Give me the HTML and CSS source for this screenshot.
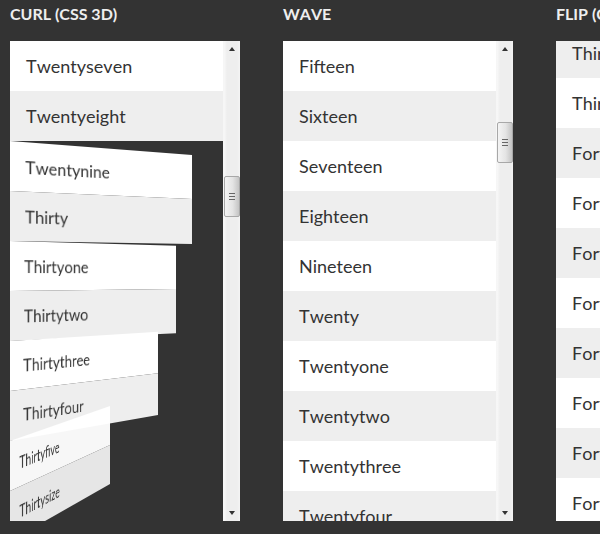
FILE: index.html
```html
<!doctype html>
<html lang="en">
<head>
  <meta charset="utf-8">
  <title>List scroll effects</title>
  <link rel="stylesheet" href="styles.css">
</head>
<body>
  <main class="columns">
    <section class="column">
      <h2 class="column__title">Curl (CSS 3D)</h2>
      <div class="scroller">
        <ul class="list">
          <li>Twentyseven</li>
          <li>Twentyeight</li>
          <li class="curl curl--29">Twentynine</li>
          <li class="curl curl--30">Thirty</li>
          <li class="curl curl--31">Thirtyone</li>
          <li class="curl curl--32">Thirtytwo</li>
          <li class="curl curl--33">Thirtythree</li>
          <li class="curl curl--34">Thirtyfour</li>
          <li class="curl curl--35">Thirtyfive</li>
          <li class="curl curl--36">Thirtysize</li>
        </ul>
        <div class="scrollbar">
          <span class="scrollbar__arrow scrollbar__arrow--up"></span>
          <div class="scrollbar__track scrollbar__track--curl">
            <div class="scrollbar__thumb"><span class="scrollbar__grip"></span></div>
          </div>
          <span class="scrollbar__arrow scrollbar__arrow--down"></span>
        </div>
      </div>
    </section>

    <section class="column">
      <h2 class="column__title">Wave</h2>
      <div class="scroller">
        <ul class="list">
          <li>Fifteen</li>
          <li>Sixteen</li>
          <li>Seventeen</li>
          <li>Eighteen</li>
          <li>Nineteen</li>
          <li>Twenty</li>
          <li>Twentyone</li>
          <li>Twentytwo</li>
          <li>Twentythree</li>
          <li>Twentyfour</li>
        </ul>
        <div class="scrollbar">
          <span class="scrollbar__arrow scrollbar__arrow--up"></span>
          <div class="scrollbar__track scrollbar__track--wave">
            <div class="scrollbar__thumb"><span class="scrollbar__grip"></span></div>
          </div>
          <span class="scrollbar__arrow scrollbar__arrow--down"></span>
        </div>
      </div>
    </section>

    <section class="column">
      <h2 class="column__title">Flip (CSS 3D)</h2>
      <div class="scroller">
        <ul class="list list--flip">
          <li>Thirtyeight</li>
          <li>Thirtynine</li>
          <li>Forty</li>
          <li>Fortyone</li>
          <li>Fortytwo</li>
          <li>Fortythree</li>
          <li>Fortyfour</li>
          <li>Fortyfive</li>
          <li>Fortysix</li>
          <li>Fortyseven</li>
        </ul>
      </div>
    </section>
  </main>
</body>
</html>
```

FILE: styles.css
```css
html {
  background-color: #333;
}

body {
  margin: 0;
  height: 534px;
  overflow: hidden;
  font-family: "Lato", "Liberation Sans", sans-serif;
  font-kerning: none;
}

.columns {
  display: flex;
  gap: 43px;
  padding-left: 10px;
}

.column {
  flex: none;
  width: 230px;
}

.column__title {
  margin: 0;
  height: 41px;
  padding-top: 5px;
  box-sizing: border-box;
  font-size: 16px;
  line-height: 18px;
  font-weight: 700;
  color: #eee;
  text-transform: uppercase;
}

.scroller {
  display: flex;
  height: 480px;
  overflow: hidden;
}

.list {
  flex: 1;
  min-width: 0;
  margin: 0;
  padding: 0;
  list-style: none;
  font-size: 18px;
  color: #333;
}

.list--flip {
  margin-top: -13px;
}

.list li {
  height: 50px;
  padding: 0 16px;
  line-height: 50px;
  background-color: #fff;
}

.list li:nth-child(even) {
  background-color: #eee;
}

/* this list starts on an even number, so the stripes swap */
.list--flip li:nth-child(odd) {
  background-color: #eee;
}

.list--flip li:nth-child(even) {
  background-color: #fff;
}

/* each row keeps its flow slot, the left edge stays put and the right side folds back */
.curl {
  transform-origin: 0 0;
}

.curl--29 { transform: matrix3d(0.971, 0.0747, 0, 0.00064, 0, 1, 0, 0, 0, 0, 1, 0, 0, 0, 0, 1); }
.curl--30 { transform: matrix3d(0.9494, 0.0417, 0, 0.000522, 0, 1, 0, 0, 0, 0, 1, 0, 0, 0, 0, 1); }
.curl--31 { transform: matrix3d(0.8999, 0.0255, 0, 0.000726, 0, 1, 0, 0, 0, 0, 1, 0, 0, 0, 0, 1); }
.curl--32 { transform: matrix3d(0.8796, -0.0106, 0, 0.000604, 0, 1, 0, 0, 0, 0, 1, 0, 0, 0, 0, 1); }
.curl--33 { transform: matrix3d(0.8351, -0.0525, 0, 0.000948, 0, 1, 0, 0, 0, 0, 1, 0, 0, 0, 0, 1); }
.curl--34 { transform: matrix3d(0.8331, -0.0996, 0, 0.000934, 0, 1, 0, 0, 0, 0, 1, 0, 0, 0, 0, 1); }
.curl--35 { transform: matrix3d(0.6019, -0.2107, 0, 0.001324, 0, 1, 0, 0, 0, 0, 1, 0, 0, 0, 0, 1); opacity: 0.96; }
.curl--36 { transform: matrix3d(0.6019, -0.2769, 0, 0.001324, 0, 1, 0, 0, 0, 0, 1, 0, 0, 0, 0, 1); opacity: 0.96; }

.scrollbar {
  flex: none;
  display: flex;
  flex-direction: column;
  width: 16px;
  background: linear-gradient(to right, #f8f8f8, #eee 3px, #eee 13px, #f4f4f4);
  border-left: 1px solid #f6f6f6;
}

.scrollbar__arrow {
  flex: none;
  height: 17px;
  position: relative;
}

.scrollbar__arrow::after {
  content: "";
  position: absolute;
  left: 5px;
  border-left: 3px solid transparent;
  border-right: 3px solid transparent;
}

.scrollbar__arrow--up::after {
  top: 6px;
  border-bottom: 4px solid #333;
}

.scrollbar__arrow--down::after {
  bottom: 6px;
  border-top: 4px solid #333;
}

.scrollbar__track {
  flex: 1;
}

.scrollbar__track--curl {
  padding-top: 118px;
}

.scrollbar__track--wave {
  padding-top: 64px;
}

.scrollbar__thumb {
  display: flex;
  align-items: center;
  justify-content: center;
  height: 39px;
  width: 14px;
  border: 1px solid #a8a8a8;
  border-radius: 2px;
  background: linear-gradient(to right, #f4f4f4, #e4e4e4 55%, #c4c4c4);
}

.scrollbar__grip {
  width: 6px;
  height: 7px;
  background: repeating-linear-gradient(to bottom, #666 0, #666 1px, transparent 1px, transparent 3px);
}
```
